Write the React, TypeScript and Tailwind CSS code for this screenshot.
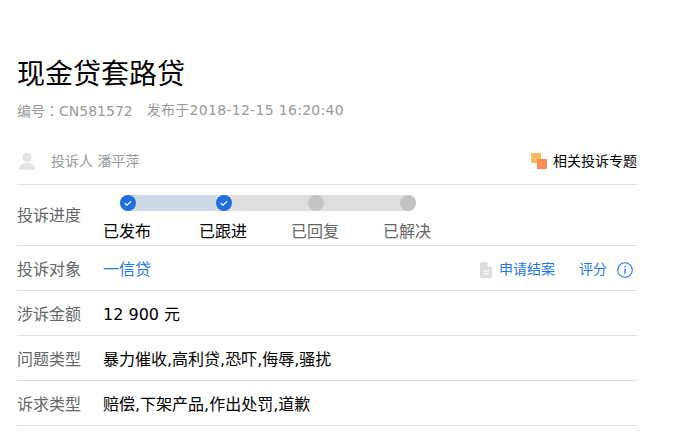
const steps = [
  { label: "已发布", done: true, width: "w-[96px]" },
  { label: "已跟进", done: true, width: "w-[92px]" },
  { label: "已回复", done: false, width: "w-[92px]" },
  { label: "已解决", done: false, width: "w-[92px]" },
];

function Check() {
  return (
    <svg width="16" height="16" viewBox="0 0 16 16">
      <circle cx="8" cy="8" r="8" fill="#1f6fe0" />
      <path d="M4.8 8.2l2.2 2 4-3.8" fill="none" stroke="#fff" strokeWidth="1.3" />
    </svg>
  );
}

function Row({ label, children }: { label: string; children: React.ReactNode }) {
  return (
    <div className="flex h-[45px] items-center border-b border-[#e0e0e0] pt-[3px]">
      <div className="w-[86px] text-[16px] text-[#666]">{label}</div>
      {children}
    </div>
  );
}

export default function App() {
  return (
    <div className="h-[438px] w-[686px] overflow-hidden bg-white pl-[17px] font-['DejaVu_Sans','Noto_Sans_CJK_SC',sans-serif]">
      <div className="w-[620px] pt-[54px]">
        <h1 className="text-[28px] leading-[42px] font-normal text-black">现金贷套路贷</h1>
        <div className="mt-[4px] flex text-[14px] leading-[20px] text-[#999]">
          <span>
            编号<span className="font-['Noto_Sans_CJK_TC']">：</span>CN581572
          </span>
          <span className="ml-[14px] tracking-[0.3px]">发布于2018-12-15 16:20:40</span>
        </div>
        <div className="mt-[18px] flex h-[46px] items-center border-b border-[#e0e0e0] pb-[1px]">
          <svg width="20" height="20" viewBox="0 0 20 20" className="mr-[14px]">
            <circle cx="10" cy="6.5" r="4.5" fill="#e2e4e8" />
            <path d="M2 19c0-5 3-7 8-7s8 2 8 7z" fill="#e2e4e8" />
          </svg>
          <span className="text-[14px] text-[#999]">投诉人 潘平萍</span>
          <div className="ml-auto flex items-center">
            <svg width="16" height="16" viewBox="0 0 16 16" className="mr-[6px]">
              <rect x="0" y="0" width="10" height="10" fill="#fdbb5c" />
              <rect x="6" y="6" width="10" height="10" fill="#fd8d58" />
            </svg>
            <span className="text-[14px] text-black">相关投诉专题</span>
          </div>
        </div>
        <div className="flex h-[61px] items-center border-b border-[#e0e0e0] pt-[2px]">
          <div className="w-[86px] text-[16px] text-[#666]">投诉进度</div>
          <div className="relative -mt-[2px] h-[61px] flex-1">
            <div className="absolute top-[10px] left-[17px] h-4 w-[296px] rounded-full bg-[#dedede]" />
            <div className="absolute top-[10px] left-[17px] h-4 w-[100px] rounded-full bg-[#cdd9e4]" />
            <div className="relative flex pt-[10px]">
              {steps.map((s) => (
                <div key={s.label} className={`flex flex-col items-start ${s.width}`}>
                  <div className="ml-[17px] h-4 w-4">
                    {s.done ? <Check /> : <div className="h-4 w-4 rounded-full bg-[#c4c4c4]" />}
                  </div>
                  <span className={`mt-[11px] text-[16px] leading-[20px] ${s.done ? "text-black" : "text-[#666]"}`}>{s.label}</span>
                </div>
              ))}
            </div>
          </div>
        </div>
        <Row label="投诉对象">
          <span className="text-[16px] text-[#1f78e8]">一信贷</span>
          <div className="ml-auto flex items-center pr-[4px] text-[14px] text-[#1f78e8]">
            <svg width="12" height="16" viewBox="0 0 12 16" className="mr-[7px]">
              <path d="M1.5 0h6L12 4.5V14.5a1.5 1.5 0 0 1-1.5 1.5h-9A1.5 1.5 0 0 1 0 14.5V1.5A1.5 1.5 0 0 1 1.5 0z" fill="#dcdcdc" />
              <path d="M7.5 0v4.5H12z" fill="#fff" />
              <path d="M3 9h6M3 12h6" stroke="#fff" strokeWidth="1.2" />
            </svg>
            <span>申请结案</span>
            <span className="ml-[24px]">评分</span>
            <svg width="16" height="16" viewBox="0 0 16 16" className="ml-[10px]">
              <circle cx="8" cy="8" r="7.3" fill="none" stroke="#1f78e8" strokeWidth="1.1" />
              <path d="M8 6.8v5M8 4v1.5" stroke="#1f78e8" strokeWidth="1.3" />
            </svg>
          </div>
        </Row>
        <Row label="涉诉金额">
          <span className="text-[16px] text-black">12 900 元</span>
        </Row>
        <Row label="问题类型">
          <span className="text-[16px] text-black">暴力催收,高利贷,恐吓,侮辱,骚扰</span>
        </Row>
        <Row label="诉求类型">
          <span className="text-[16px] text-black">赔偿,下架产品,作出处罚,道歉</span>
        </Row>
      </div>
    </div>
  );
}
